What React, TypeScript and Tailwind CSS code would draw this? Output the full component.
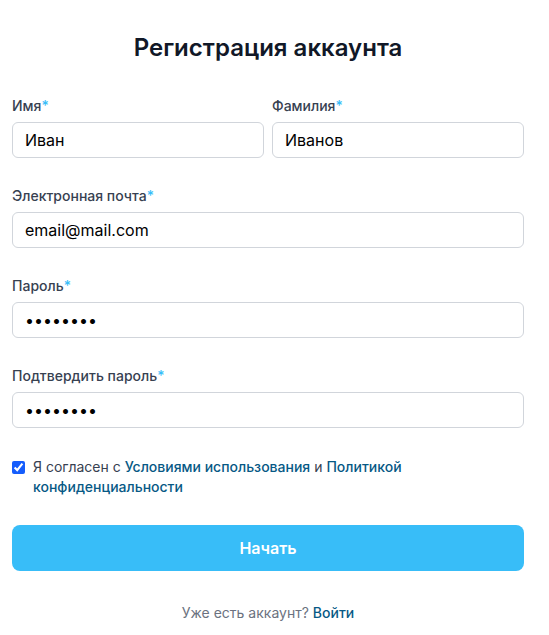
import React from 'react';

const Field: React.FC<{ label: string; value: string; type?: string }> = ({ label, value, type = 'text' }) => (
  <div className="flex flex-col">
    <label className="mb-1.5 text-sm font-medium leading-5 text-[#374151]">
      {label}
      <span className="text-[#38bdf8]">*</span>
    </label>
    <input
      type={type}
      defaultValue={value}
      className="h-9 w-full rounded-md border border-[#d1d5db] bg-white px-3 text-base text-black outline-none"
    />
  </div>
);

export default function App() {
  return (
    <div className="min-h-screen bg-white font-['Inter',sans-serif]">
      <div className="ml-3 w-[512px] pt-8">
        <h1 className="mb-8 text-center text-2xl leading-8 font-semibold text-[#111827]">Регистрация аккаунта</h1>

        <div className="flex flex-col gap-7">
          <div className="grid grid-cols-2 gap-2">
            <Field label="Имя" value="Иван" />
            <Field label="Фамилия" value="Иванов" />
          </div>
          <Field label="Электронная почта" value="email@mail.com" type="email" />
          <Field label="Пароль" value="password" type="password" />
          <Field label="Подтвердить пароль" value="password" type="password" />

          <label className="mt-px flex items-start gap-2 text-sm leading-5 text-[#374151]">
            <input type="checkbox" defaultChecked className="mt-[4px] h-[13px] w-[13px] shrink-0 accent-blue-600" />
            <span>
              Я согласен с <a className="font-medium text-[#075985]">Условиями использования</a> и{' '}
              <a className="font-medium text-[#075985]">Политикой конфиденциальности</a>
            </span>
          </label>

          <button className="h-[46px] w-full rounded-lg bg-[#38bdf8] text-base font-semibold text-white">Начать</button>
        </div>

        <p className="mt-8 text-center text-sm leading-5 text-[#6b7280]">
          Уже есть аккаунт? <a className="font-medium text-[#075985]">Войти</a>
        </p>
      </div>
    </div>
  );
}
